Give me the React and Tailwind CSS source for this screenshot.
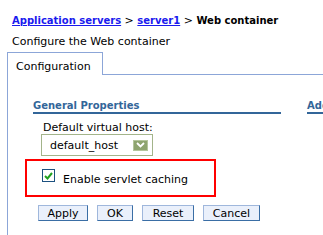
export default function App() {
  const buttons = [
    { label: 'Apply', w: 'w-[50px]' },
    { label: 'OK', w: 'w-[36px]' },
    { label: 'Reset', w: 'w-[52px]' },
    { label: 'Cancel', w: 'w-[57px]' },
  ]

  return (
    <div className="h-[235px] w-[323px] overflow-hidden bg-white font-['DejaVu_Sans',sans-serif] text-[11px] leading-[13px] text-black">
      <div className="pl-[12px] pt-[14px] text-[10px]">
        <a href="#" className="font-bold text-[#1a1aee] underline">Application servers</a>
        <span className="text-[11px]"> &gt; </span>
        <a href="#" className="font-bold text-[#1a1aee] underline">server1</a>
        <span className="font-bold"><span className="text-[11px] font-normal"> &gt; </span>Web container</span>
      </div>
      <p className="mt-[8px] pl-[12px]">Configure the Web container</p>

      <div className="mt-[4px] flex h-[23px]">
        <div className="ml-[7px] w-[96px] border-l border-r border-t border-[#8ca6d8] pl-[8px] pt-[7px]">
          Configuration
        </div>
        <div className="flex-1 border-b border-[#8ca6d8]" />
      </div>

      <div className="ml-[7px] h-[200px] overflow-hidden border-l border-[#8ca6d8]">
        <div className="flex whitespace-nowrap pt-[24px] text-[10px]">
          <div className="ml-[25px] w-[248px] shrink-0 border-b-2 border-[#336699] font-bold text-[#336699]">
            General Properties
          </div>
          <div className="ml-[26px] shrink-0 border-b-2 border-[#336699] font-bold text-[#336699]">
            Additional Properties
          </div>
        </div>

        <div className="ml-[35px] mt-[7px]">Default virtual host:</div>
        <div className="ml-[33px] flex h-[22px] w-[112px] items-center border border-[#a3b48a] pl-[8px]">
          <span className="flex-1">default_host</span>
          <span className="mr-[4px] flex h-[11px] w-[15px] items-center justify-center border border-[#b4c59c] bg-[#8ea46f]">
            <svg width="9" height="6" viewBox="0 0 9 6">
              <path d="M1 1 L4.5 4.5 L8 1" fill="none" stroke="#ffffff" strokeWidth="1.8" />
            </svg>
          </span>
        </div>

        <div className="ml-[17px] mt-[3px] flex h-[38px] w-[191px] items-start border-2 border-[#ff0000] pl-[15px] pt-[8px]">
          <span className="flex h-[13px] w-[13px] items-center justify-center border border-[#1c5180] bg-white">
            <svg width="9" height="8" viewBox="0 0 9 8">
              <path d="M1 4 L3.5 6.5 L8 1" fill="none" stroke="#21a121" strokeWidth="2" />
            </svg>
          </span>
          <span className="ml-[8px] mt-[4px]">Enable servlet caching</span>
        </div>

        <div className="ml-[30px] mt-[8px] flex gap-[9px]">
          {buttons.map((b) => (
            <button
              key={b.label}
              className={`${b.w} h-[16px] border border-b-[#3a6ea5] border-l-[#9fb7dc] border-r-[#3a6ea5] border-t-[#9fb7dc] bg-[#eaf0fb] text-center text-[11px] leading-[13px]`}
            >
              {b.label}
            </button>
          ))}
        </div>
      </div>
    </div>
  )
}
